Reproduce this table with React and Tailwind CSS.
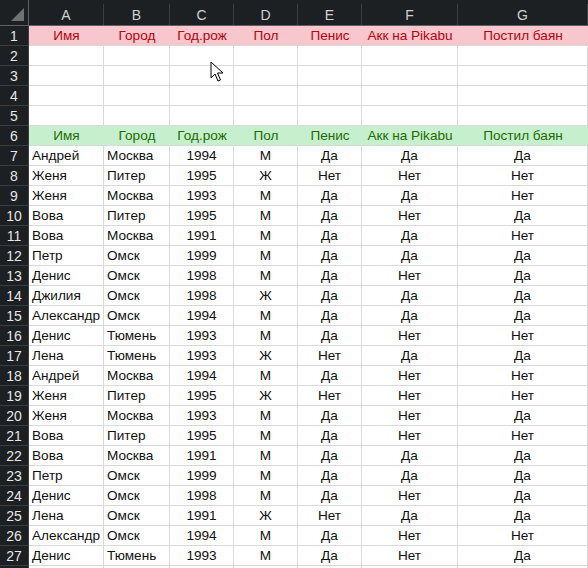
import React from "react";

const cols = ["A", "B", "C", "D", "E", "F", "G"];
const heads = ["Имя", "Город", "Год.рож", "Пол", "Пенис", "Акк на Pikabu", "Постил баян"];

const rows = [
  ["Андрей", "Москва", "1994", "М", "Да", "Да", "Да"],
  ["Женя", "Питер", "1995", "Ж", "Нет", "Нет", "Нет"],
  ["Женя", "Москва", "1993", "М", "Да", "Да", "Нет"],
  ["Вова", "Питер", "1995", "М", "Да", "Нет", "Да"],
  ["Вова", "Москва", "1991", "М", "Да", "Да", "Нет"],
  ["Петр", "Омск", "1999", "М", "Да", "Да", "Да"],
  ["Денис", "Омск", "1998", "М", "Да", "Нет", "Да"],
  ["Джилия", "Омск", "1998", "Ж", "Да", "Да", "Да"],
  ["Александр", "Омск", "1994", "М", "Да", "Да", "Да"],
  ["Денис", "Тюмень", "1993", "М", "Да", "Нет", "Нет"],
  ["Лена", "Тюмень", "1993", "Ж", "Нет", "Да", "Да"],
  ["Андрей", "Москва", "1994", "М", "Да", "Нет", "Нет"],
  ["Женя", "Питер", "1995", "Ж", "Нет", "Нет", "Нет"],
  ["Женя", "Москва", "1993", "М", "Да", "Нет", "Да"],
  ["Вова", "Питер", "1995", "М", "Да", "Нет", "Нет"],
  ["Вова", "Москва", "1991", "М", "Да", "Да", "Да"],
  ["Петр", "Омск", "1999", "М", "Да", "Да", "Да"],
  ["Денис", "Омск", "1998", "М", "Да", "Нет", "Да"],
  ["Лена", "Омск", "1991", "Ж", "Нет", "Да", "Да"],
  ["Александр", "Омск", "1994", "М", "Да", "Нет", "Нет"],
  ["Денис", "Тюмень", "1993", "М", "Да", "Нет", "Да"],
];

function RowNum({ n }) {
  return (
    <div className="flex h-5 items-center justify-center border-b border-r border-[#3a3e40] bg-[#1c2022] text-[14px] text-[#e6e6e6]">
      {n}
    </div>
  );
}

function Cell({ children, left }) {
  return (
    <div
      className={
        "flex h-5 items-center overflow-visible whitespace-nowrap border-b border-r border-[#d9d9d9] bg-white text-[#111] " +
        (left ? "justify-start pl-[3px]" : "justify-center")
      }
    >
      {children}
    </div>
  );
}

function StyledRow({ n, bg, color }) {
  return (
    <>
      <RowNum n={n} />
      {heads.map((h, i) => (
        <div key={i} className={"flex h-5 items-center justify-center border-b border-[#d9d9d9] " + bg + " " + color}>
          {h}
        </div>
      ))}
    </>
  );
}

function Cursor() {
  return (
    <svg className="absolute left-[210px] top-[61px]" width="14" height="22" viewBox="0 0 14 22">
      <path
        d="M1 1 L1 17 L5 13 L8 20 L10.5 19 L7.5 12 L13 12 Z"
        fill="#fff"
        stroke="#000"
        strokeWidth="1"
        strokeLinejoin="miter"
      />
    </svg>
  );
}

export default function App() {
  return (
    <div className="relative h-[568px] w-[588px] overflow-hidden bg-white text-[13.6px] leading-none [font-family:'Liberation_Sans',Arial,sans-serif]">
      <div className="grid grid-cols-[29px_75px_66px_64px_64px_64px_96px_130px]">
        {/* column header */}
        <div className="relative h-[26px] border-b border-r border-[#5c6062] bg-[#1c2022]">
          <div className="absolute bottom-[4px] right-[4px] h-0 w-0 border-b-[13px] border-l-[13px] border-b-[#6e7274] border-l-transparent" />
        </div>
        {cols.map((c) => (
          <div key={c} className="flex h-[26px] items-end justify-center border-b border-[#5c6062] bg-[#1c2022] pt-[4px] text-[14px] text-[#d0d0d0]">
            <div className="flex h-full w-full items-center justify-center border-r border-[#3a3e40]">{c}</div>
          </div>
        ))}

        <StyledRow n={1} bg="bg-[#f8c7cd]" color="text-[#b8000a]" />
        {[2, 3, 4, 5].map((n) => (
          <React.Fragment key={n}>
            <RowNum n={n} />
            {cols.map((c) => (
              <Cell key={c} />
            ))}
          </React.Fragment>
        ))}
        <StyledRow n={6} bg="bg-[#c6efce]" color="text-[#1f6b00]" />
        {rows.map((r, i) => (
          <React.Fragment key={i}>
            <RowNum n={i + 7} />
            {r.map((v, j) => (
              <Cell key={j} left={j < 2}>
                {v}
              </Cell>
            ))}
          </React.Fragment>
        ))}
        {/* partly visible row 28 */}
        <div className="h-5 border-r border-[#3a3e40] bg-[#1c2022]" />
        {cols.map((c) => (
          <div key={c} className="h-5 border-r border-[#d9d9d9] bg-white" />
        ))}
      </div>
      <Cursor />
    </div>
  );
}
